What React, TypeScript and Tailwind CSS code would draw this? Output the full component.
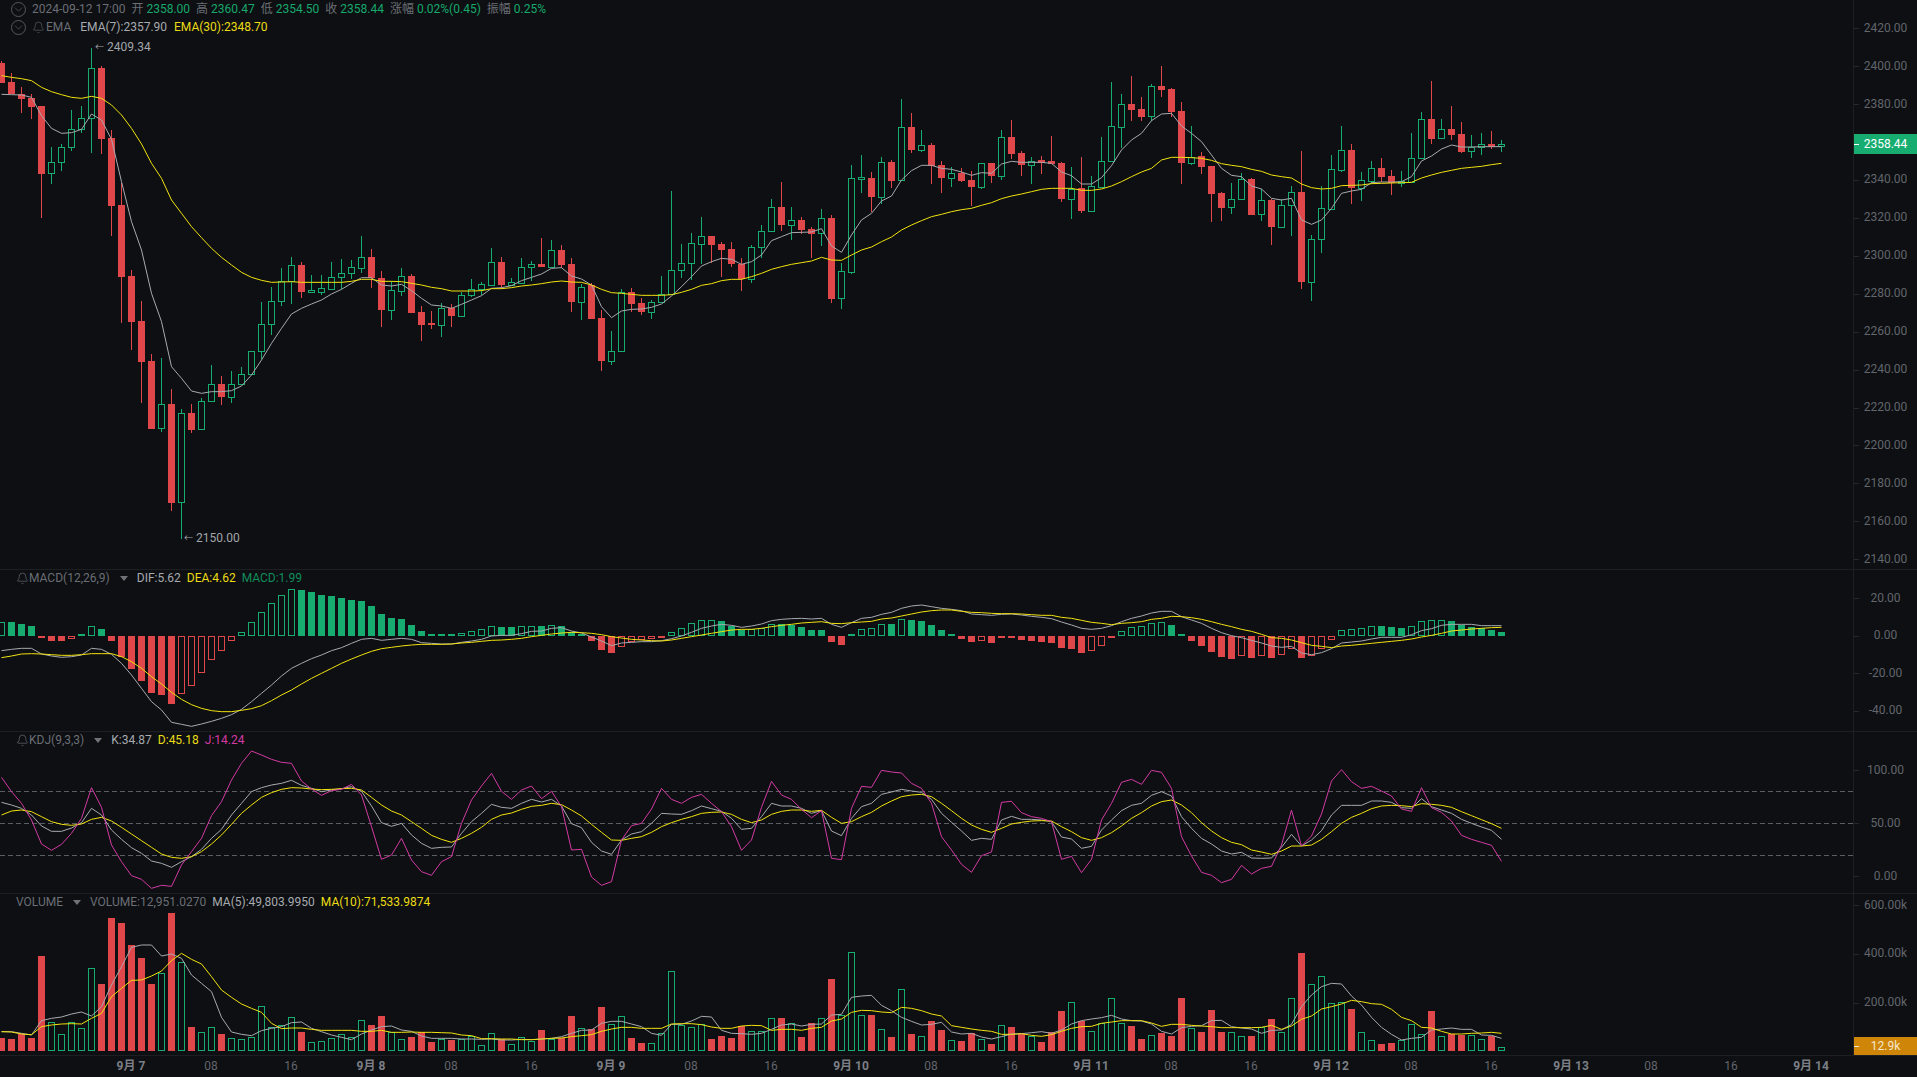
import { Bell, ChevronDown } from 'lucide-react'

const GREEN = '#17ad70'
const RED = '#e0474b'
const GREY = '#a7aaaf'
const YELLOW = '#f2e30f'
const PINK = '#d43aa3'
const BG = '#0d0f12'

// numbers below are read off the picture, in 1/3 px so the crops could be copied straight in
// [wick top, body top, body bottom, wick bottom, up]
const candles: number[][] = [
  [183,190,248,248,0],[218,247,283,283,0],[262,283,296,340,0],[283,295,320,357,0],[318,318,521,653,0],[441,487,520,553,1],[432,442,487,513,1],[330,388,442,452,1],[317,355,388,400,1],[145,205,355,458,1],
  [197,205,416,462,0],[390,415,617,708,0],[548,615,830,968,0],[810,828,965,1050,0],[903,963,1085,1208,0],[1063,1083,1287,1287,0],[1075,1213,1285,1297,1],[1168,1212,1508,1532,0],[1228,1240,1507,1618,1],[1212,1240,1290,1300,0],
  [1193,1202,1288,1288,1],[1095,1153,1202,1205,1],[1128,1153,1190,1216,0],[1113,1153,1190,1210,1],[1102,1123,1153,1153,1],[1053,1053,1123,1125,1],[905,973,1054,1077,1],[862,904,973,1005,1],[805,842,904,917,1],[772,796,842,913,1],
  [786,795,875,893,0],[824,870,875,875,1],[825,865,875,885,1],[786,830,866,866,1],[778,820,830,868,1],[780,802,820,838,1],[708,772,803,820,1],[747,771,835,865,0],[813,835,930,981,0],[842,871,930,960,1],
  [805,829,872,887,1],[822,828,938,938,0],[917,936,975,1022,0],[933,969,974,986,0],[908,925,974,1010,1],[912,925,947,982,0],[877,886,947,947,1],[837,866,886,892,1],[847,853,867,886,1],[743,787,855,855,1],
  [770,787,855,868,0],[835,847,855,855,1],[773,802,849,850,1],[783,792,802,842,1],[714,792,802,802,0],[720,750,802,802,1],[735,750,795,805,0],[775,792,905,935,0],[853,862,905,961,1],[850,855,957,957,0],
  [930,955,1083,1113,0],[993,1052,1082,1094,1],[867,877,1052,1055,1],[864,877,912,935,0],[895,910,935,945,0],[900,907,935,956,1],[827,883,907,907,1],[573,811,883,883,1],[732,790,811,835,1],[699,730,790,840,1],
  [652,709,731,792,1],[708,708,734,790,0],[726,732,749,830,0],[727,748,791,800,0],[775,791,838,873,0],[735,742,838,848,1],[675,694,742,775,1],[596,622,694,694,1],[545,622,675,692,0],[621,661,674,720,1],
  [652,660,690,703,0],[680,687,701,775,0],[628,655,700,737,1],[646,654,896,908,0],[788,814,895,928,1],[495,535,815,822,1],[466,532,537,578,1],[517,534,590,637,0],[472,487,590,612,1],[480,487,543,563,0],
  [297,382,541,543,1],[340,381,449,458,0],[390,436,449,457,1],[430,435,497,553,0],[484,495,533,578,0],[500,520,533,560,1],[504,518,543,545,0],[513,540,560,618,0],[490,490,560,566,1],[489,489,527,548,0],
  [390,412,527,540,1],[360,411,461,476,0],[453,460,495,527,0],[472,484,494,551,1],[468,480,488,521,0],[408,484,491,491,0],[487,489,597,607,0],[500,566,596,656,1],[471,564,633,640,0],[527,559,632,632,1],
  [411,484,560,560,1],[245,379,484,484,1],[282,313,380,445,1],[228,312,330,362,0],[291,327,351,363,0],[252,259,349,362,1],[197,258,270,290,0],[263,267,336,350,0],[306,333,489,553,0],[378,470,488,496,1],
  [455,468,500,522,0],[498,498,581,666,0],[576,579,623,663,0],[548,598,622,641,1],[520,538,598,598,1],[535,537,644,644,0],[567,601,643,663,1],[597,600,681,735,0],[598,616,680,680,1],[557,577,616,708,1],
  [454,576,846,867,0],[705,718,845,902,1],[558,625,718,758,1],[465,508,626,626,1],[378,451,509,516,1],[432,450,564,612,0],[515,541,563,603,1],[483,505,542,552,1],[474,504,530,546,0],[510,528,548,586,0],
  [514,544,548,560,1],[399,475,545,545,1],[336,358,475,475,1],[243,357,417,431,0],[357,388,415,415,1],[318,387,404,420,0],[366,402,455,460,0],[405,440,454,473,1],[398,433,440,464,1],[393,432,440,447,0],
  [421,433,437,456,1],
]

const ema30 = [227,232,236,242,262,275,284,292,295,289,295,315,345,385,432,490,535,600,640,680,713,745,772,795,817,832,841,847,846,845,847,847,847,847,847,844,838,838,844,844,845,850,855,862,866,873,873,873,872,866,866,863,858,855,851,846,843,846,847,855,868,878,880,883,886,886,886,884,877,868,856,851,842,838,838,830,820,808,800,793,788,783,772,780,781,765,750,741,725,711,690,675,662,650,643,635,629,625,616,608,596,588,582,575,568,565,565,565,571,571,567,558,545,530,516,505,480,472,472,473,475,481,491,496,500,508,514,525,530,534,552,563,567,565,557,556,555,551,550,549,548,547,534,525,517,511,505,502,499,494,490]
const ema7 = [283,284,285,292,347,385,400,398,388,342,360,418,545,665,750,880,965,1100,1135,1173,1180,1175,1175,1172,1158,1125,1080,1030,985,942,925,912,900,882,868,850,833,833,855,858,853,872,895,915,918,925,913,900,887,865,863,857,842,832,822,805,803,828,837,855,920,953,933,928,927,922,912,888,860,830,798,785,775,778,793,785,765,722,710,698,697,696,686,738,757,705,660,640,603,588,540,512,496,496,505,508,516,526,518,520,492,484,487,487,487,490,516,527,552,552,533,497,450,420,400,362,342,340,378,400,425,465,505,526,530,558,567,595,600,595,660,673,660,625,580,573,568,548,546,546,545,530,483,468,447,435,441,441,440,440,440]

const macdHist = [41,42,36,30,-5,-15,-15,-8,6,30,21,-15,-62,-99,-135,-171,-177,-204,-174,-150,-110,-71,-45,-15,11,41,71,98,122,140,138,132,123,120,114,108,105,90,66,54,51,33,15,6,6,6,8,14,21,29,27,27,29,29,30,32,30,11,6,-15,-42,-51,-32,-17,-12,-10,-6,11,23,38,47,47,45,31,19,21,25,35,35,33,27,18,18,-18,-27,6,20,23,35,36,50,48,45,33,18,6,-9,-18,-14,-21,-7,-7,-12,-15,-18,-21,-36,-39,-51,-44,-29,-7,14,26,29,38,41,33,6,-15,-30,-48,-63,-69,-59,-66,-59,-66,-57,-40,-65,-59,-40,-11,17,20,23,29,30,27,24,29,44,47,47,45,33,27,23,18,12]
const macdHollow = new Set([0,7,9,18,19,20,21,22,23,24,25,26,27,28,29,46,47,48,49,52,53,55,62,63,64,65,67,68,69,70,71,75,76,77,86,87,88,90,98,100,101,109,110,111,112,113,114,115,116,124,126,128,129,131,132,133,134,135,136,137,141,142,143,144])
const dif = [272,268,265,265,282,288,292,290,285,265,268,283,310,345,385,425,450,487,493,499,492,484,475,464,448,425,400,375,348,325,310,296,285,272,263,250,238,235,241,238,235,238,248,250,252,252,247,243,238,228,226,226,221,214,213,205,203,213,219,231,243,257,249,247,245,245,242,236,228,217,205,198,193,196,202,198,192,182,178,176,175,177,175,193,202,188,175,172,163,157,145,138,135,140,145,148,152,162,164,166,163,162,165,169,172,176,186,195,205,208,205,197,185,175,168,159,154,154,170,180,190,205,218,227,233,241,249,258,262,259,279,284,278,266,249,246,243,237,232,232,232,224,212,206,196,193,193,193,197,197,197]
const dea = [293,288,282,281,282,284,286,286,284,281,281,281,290,305,325,350,372,397,418,434,445,452,455,455,451,446,437,422,405,390,372,355,340,325,310,297,285,274,266,262,258,255,253,253,253,252,249,247,244,241,240,238,235,230,226,222,219,217,218,220,224,230,234,238,240,242,243,240,235,230,225,220,215,210,208,208,205,200,196,193,189,187,185,190,191,188,186,184,177,174,168,162,156,152,150,150,154,157,158,160,161,161,162,164,166,166,172,175,181,187,190,194,190,188,185,178,175,169,170,173,178,185,193,200,208,214,223,233,235,240,248,256,259,263,258,256,253,250,247,244,241,237,231,226,220,213,210,207,205,203,202]

const kdjK = [247,255,265,285,318,334,334,324,308,265,285,330,358,383,400,423,430,442,425,410,388,355,328,285,250,215,203,195,190,181,196,205,215,210,206,200,214,258,308,319,310,345,370,385,382,381,340,305,280,253,262,265,250,238,246,238,258,311,323,367,393,403,360,342,335,310,280,282,283,272,258,266,274,295,328,325,290,250,258,258,265,280,272,333,347,295,260,250,223,216,208,213,217,238,280,307,333,361,355,358,300,289,298,298,300,305,351,357,385,379,330,300,272,256,250,226,215,228,290,325,355,372,393,402,397,414,415,414,382,343,378,360,332,285,256,256,256,243,243,247,263,265,236,260,270,280,298,310,321,331,358]
const kdjD = [285,273,270,275,290,305,313,316,312,298,292,303,322,342,362,382,402,412,415,410,395,372,345,313,280,255,232,218,208,203,204,207,209,208,206,205,210,232,255,273,285,305,325,346,358,367,355,340,322,298,285,279,268,259,256,250,254,270,288,313,337,360,361,355,350,337,320,308,298,290,280,277,276,283,298,308,300,283,274,270,270,274,271,292,310,305,290,277,258,243,230,225,223,230,250,272,295,315,328,337,325,312,307,303,302,303,320,335,353,361,353,338,318,295,278,258,245,240,255,278,308,333,353,367,374,390,396,403,393,378,378,375,358,335,310,292,280,266,258,256,257,260,251,253,256,262,275,287,299,311,325]
const kdjJ = [172,215,250,300,372,391,373,340,295,203,262,375,425,467,478,505,496,499,435,395,355,287,245,180,130,93,105,118,127,130,183,207,226,212,208,193,225,320,418,405,355,420,455,466,425,410,310,240,198,160,214,238,210,198,236,214,260,390,388,471,496,485,360,317,310,267,205,238,250,232,223,250,275,320,391,360,262,184,225,238,268,293,272,415,419,265,199,202,151,156,159,190,205,250,350,390,433,457,407,396,247,244,278,290,295,305,418,409,458,418,300,250,187,178,193,151,157,205,350,408,457,466,488,478,436,462,445,439,375,270,378,348,282,183,149,185,205,199,213,228,267,274,203,263,277,303,346,358,367,376,424]

const vol = [444,447,432,444,198,395,433,397,415,235,282,84,99,165,204,282,250,69,217,411,427,412,432,445,448,442,349,412,406,382,426,457,454,444,433,440,391,405,378,427,448,441,425,456,448,450,446,438,466,430,447,463,442,454,420,448,445,378,415,418,351,403,379,444,460,460,430,244,405,412,403,447,438,444,409,424,423,385,384,400,441,400,385,267,375,187,376,375,418,441,298,432,439,393,420,451,453,430,448,462,406,411,431,437,456,426,363,337,393,424,400,325,398,408,447,436,429,438,324,415,426,360,426,427,439,438,410,387,427,325,189,283,259,340,337,357,427,451,462,459,450,403,433,363,438,432,434,436,448,437,472]
const ma5 = [425,425,430,435,392,385,381,372,366,378,350,285,230,172,165,165,198,192,205,255,280,305,382,426,433,437,422,415,410,398,396,415,425,435,442,449,432,420,410,408,420,424,438,445,445,445,447,447,448,447,450,450,448,449,447,445,440,430,421,420,400,394,394,402,410,430,436,403,403,393,379,381,421,430,431,433,430,418,405,402,408,403,402,375,373,322,318,316,346,362,382,394,405,403,397,426,432,430,441,447,440,432,431,428,425,430,420,402,392,387,383,376,387,392,393,402,424,432,413,409,407,392,391,410,414,417,430,421,420,403,350,315,290,280,282,318,345,382,412,433,450,445,442,420,417,414,418,418,435,436,445]
const ma10 = [425,426,432,434,410,405,402,401,402,385,370,320,295,271,270,258,243,212,190,208,222,260,300,322,342,355,367,400,416,414,414,418,421,421,421,421,424,424,421,427,427,426,427,427,428,429,435,437,446,446,447,447,449,449,447,445,444,440,437,434,424,417,412,412,415,415,415,402,401,401,404,411,415,415,408,406,407,421,418,418,421,415,412,393,387,367,361,362,366,368,352,355,362,372,378,407,412,417,421,424,433,433,431,436,439,434,424,415,410,409,400,396,392,392,392,399,409,403,403,406,408,410,413,413,413,413,412,406,418,408,388,378,357,350,342,331,335,341,343,358,382,392,412,414,424,432,432,430,429,427,430]

const toPoints = (ys: number[], offset: number) =>
  ys.map((y, i) => `${1.5 + i * 10},${offset + y / 3}`).join(' ')

const priceTicks = ['2420.00','2400.00','2380.00','2360.00','2340.00','2320.00','2300.00','2280.00','2260.00','2240.00','2220.00','2200.00','2180.00','2160.00','2140.00']
const timeTicks = ['9月 7','08','16','9月 8','08','16','9月 9','08','16','9月 10','08','16','9月 11','08','16','9月 12','08','16','9月 13','08','16','9月 14']

function Line({ ys, offset, color }: { ys: number[]; offset: number; color: string }) {
  return <polyline points={toPoints(ys, offset)} fill="none" stroke={color} strokeWidth="1" strokeLinejoin="round" />
}

function Caret() {
  return (
    <svg width="8" height="5" viewBox="0 0 8 5" className="ml-[10px] mr-[9px] shrink-0">
      <polygon points="0,0 8,0 4,5" fill="#6f7278" />
    </svg>
  )
}

function CircleChevron() {
  return (
    <span className="w-[15px] h-[15px] rounded-full border border-[#55585e] flex items-center justify-center shrink-0">
      <ChevronDown className="w-[13px] h-[13px] text-[#62656b]" strokeWidth={1.25} />
    </span>
  )
}

function Axis({ ticks, rowClass, listClass, children }: { ticks: string[]; rowClass: string; listClass: string; children?: React.ReactNode }) {
  return (
    <div className="relative w-[64px] shrink-0 border-l border-[#1d1f23] overflow-hidden">
      <div className={`flex flex-col ${listClass}`}>
        {ticks.map((t) => (
          <div key={t} className={`relative flex items-center justify-center text-[#62656c] ${rowClass}`}>
            <span className="absolute left-0 top-1/2 w-[5px] h-px bg-[#26282c]" />
            {t}
          </div>
        ))}
      </div>
      {children}
    </div>
  )
}

function Extreme({ value, className }: { value: string; className: string }) {
  return (
    <div className={`absolute flex items-center text-[#a2a5aa] whitespace-nowrap ${className}`}>
      <span className="text-[9px] mr-[3px]">←</span>
      {value}
    </div>
  )
}

function MainChart() {
  return (
    <svg width="1853" height="569" viewBox="0 0 1853 569" className="block" shapeRendering="crispEdges">
      {candles.map(([wt, bt, bb, wb, up], i) => {
        const color = up ? GREEN : RED
        const top = Math.round(bt / 3)
        const h = Math.max(Math.round(bb / 3) - top, 1)
        return (
          <g key={i}>
            <rect x={1 + i * 10} y={wt / 3} width="1" height={(wb - wt) / 3} fill={color} />
            {up ? (
              <rect x={i * 10 - 1.5} y={top + 0.5} width="6" height={h} fill={BG} stroke={color} />
            ) : (
              <rect x={i * 10 - 2} y={top} width="7" height={h} fill={color} />
            )}
          </g>
        )
      })}
      <g shapeRendering="auto">
        <Line ys={ema7} offset={0} color={GREY} />
        <Line ys={ema30} offset={0} color={YELLOW} />
      </g>
    </svg>
  )
}

function MacdChart() {
  return (
    <svg width="1853" height="161" viewBox="0 570 1853 161" className="block" shapeRendering="crispEdges">
      {macdHist.map((v, i) => {
        const color = v > 0 ? GREEN : RED
        const h = Math.max(Math.round(Math.abs(v) / 3), 1)
        const y = v > 0 ? 636 - h : 636
        return macdHollow.has(i) ? (
          <rect key={i} x={i * 10 - 1.5} y={y + 0.5} width="6" height={h - 1} fill="none" stroke={color} />
        ) : (
          <rect key={i} x={i * 10 - 2} y={y} width="7" height={h} fill={color} />
        )
      })}
      <g shapeRendering="auto">
        <Line ys={dif} offset={560} color={GREY} />
        <Line ys={dea} offset={560} color={YELLOW} />
      </g>
    </svg>
  )
}

function KdjChart() {
  return (
    <svg width="1853" height="161" viewBox="0 732 1853 161" className="block">
      {[791.5, 823.5, 855.5].map((y) => (
        <line key={y} x1="0" x2="1853" y1={y} y2={y} stroke="#5a5d63" strokeDasharray="5 3" />
      ))}
      <Line ys={kdjK} offset={720} color={GREY} />
      <Line ys={kdjD} offset={720} color={YELLOW} />
      <Line ys={kdjJ} offset={720} color={PINK} />
    </svg>
  )
}

function VolumeChart() {
  return (
    <svg width="1853" height="161" viewBox="0 894 1853 161" className="block" shapeRendering="crispEdges">
      {vol.map((z, i) => {
        const top = Math.round(890 + z / 3)
        return candles[i][4] ? (
          <rect key={i} x={i * 10 - 1.5} y={top + 0.5} width="6" height={1050 - top} fill="none" stroke={GREEN} />
        ) : (
          <rect key={i} x={i * 10 - 2} y={top} width="7" height={1051 - top} fill={RED} />
        )
      })}
      <g shapeRendering="auto">
        <Line ys={ma5} offset={890} color={GREY} />
        <Line ys={ma10} offset={890} color={YELLOW} />
      </g>
    </svg>
  )
}

export default function App() {
  return (
    <div className="w-[1917px] h-[1077px] overflow-hidden flex flex-col bg-[#0d0f12] text-xs leading-[15px] [font-family:Roboto,'Noto_Sans_CJK_SC',sans-serif]">
      {/* main pane */}
      <div className="h-[570px] flex border-b border-[#1d1f23]">
        <div className="relative flex-1">
          <MainChart />
          <div className="absolute left-[11px] top-[2px] flex items-center gap-[6px] text-[#6b6e75] whitespace-nowrap">
            <CircleChevron />
            <span>2024-09-12 17:00</span>
            <span>开 <span className="text-[#17a86c]">2358.00</span></span>
            <span>高 <span className="text-[#17a86c]">2360.47</span></span>
            <span>低 <span className="text-[#17a86c]">2354.50</span></span>
            <span>收 <span className="text-[#17a86c]">2358.44</span></span>
            <span>涨幅 <span className="text-[#17a86c]">0.02%(0.45)</span></span>
            <span>振幅 <span className="text-[#17a86c]">0.25%</span></span>
          </div>
          <div className="absolute left-[11px] top-[20px] flex items-center text-[#6b6e75] whitespace-nowrap">
            <CircleChevron />
            <Bell className="w-[13px] h-[13px] ml-[6px] text-[#5d6066]" strokeWidth={1.25} />
            <span className="ml-px">EMA</span>
            <span className="ml-[9px] text-[#a7aaaf]">EMA(7):2357.90</span>
            <span className="ml-[7px] text-[#ebdc16]">EMA(30):2348.70</span>
          </div>
          <Extreme value="2409.34" className="left-[95px] top-[40px]" />
          <Extreme value="2150.00" className="left-[184px] top-[531px]" />
        </div>
        <Axis ticks={priceTicks} rowClass="h-[37.95px]" listClass="pt-[9.2px]">
          <div className="absolute left-0 right-0 top-[134px] h-[20px] bg-[#17ad70] text-white flex items-center justify-center">
            <span className="absolute left-0 top-1/2 w-[5px] h-px bg-white" />
            2358.44
          </div>
        </Axis>
      </div>

      {/* MACD */}
      <div className="h-[162px] flex border-b border-[#1d1f23]">
        <div className="relative flex-1">
          <MacdChart />
          <div className="absolute left-[16px] top-[1px] flex items-center text-[#6b6e75] whitespace-nowrap">
            <Bell className="w-[13px] h-[13px]" strokeWidth={1.25} />
            <span>MACD(12,26,9)</span>
            <Caret />
            <span className="text-[#a7aaaf]">DIF:5.62</span>
            <span className="ml-[6px] text-[#ebdc16]">DEA:4.62</span>
            <span className="ml-[6px] text-[#128d5b]">MACD:1.99</span>
          </div>
        </div>
        <Axis ticks={['20.00', '0.00', '-20.00', '-40.00']} rowClass="h-[37.5px]" listClass="pt-[9.7px]" />
      </div>

      {/* KDJ */}
      <div className="h-[162px] flex border-b border-[#1d1f23]">
        <div className="relative flex-1">
          <KdjChart />
          <div className="absolute left-[16px] top-[1px] flex items-center text-[#6b6e75] whitespace-nowrap">
            <Bell className="w-[13px] h-[13px]" strokeWidth={1.25} />
            <span>KDJ(9,3,3)</span>
            <Caret />
            <span className="text-[#a7aaaf]">K:34.87</span>
            <span className="ml-[6px] text-[#ebdc16]">D:45.18</span>
            <span className="ml-[6px] text-[#d43aa3]">J:14.24</span>
          </div>
        </div>
        <Axis ticks={['100.00', '50.00', '0.00']} rowClass="h-[53px]" listClass="pt-[11.5px]" />
      </div>

      {/* volume */}
      <div className="h-[162px] flex border-b border-[#1d1f23]">
        <div className="relative flex-1">
          <VolumeChart />
          <div className="absolute left-[16px] top-[1px] flex items-center text-[#6b6e75] whitespace-nowrap">
            <span>VOLUME</span>
            <Caret />
            <span>VOLUME:12,951.0270</span>
            <span className="ml-[6px] text-[#a7aaaf]">MA(5):49,803.9950</span>
            <span className="ml-[6px] text-[#ebdc16]">MA(10):71,533.9874</span>
          </div>
        </div>
        <Axis ticks={['600.00k', '400.00k', '200.00k']} rowClass="h-[48.8px]" listClass="-mt-[13.4px]">
          <div className="absolute left-0 right-0 bottom-0 h-[18px] bg-[#cf8608] text-[#f4e6cc] flex items-center justify-center">
            <span className="absolute left-0 top-1/2 w-[5px] h-px bg-[#f4e6cc]" />
            12.9k
          </div>
        </Axis>
      </div>

      {/* time axis */}
      <div className="flex-1 flex items-center pl-[91px]">
        {timeTicks.map((t, i) => (
          <div
            key={i}
            className={`w-[80px] shrink-0 text-center ${t.includes('月') ? 'font-bold text-[#7c7f86]' : 'text-[#62656c]'}`}
          >
            {t}
          </div>
        ))}
      </div>
    </div>
  )
}
